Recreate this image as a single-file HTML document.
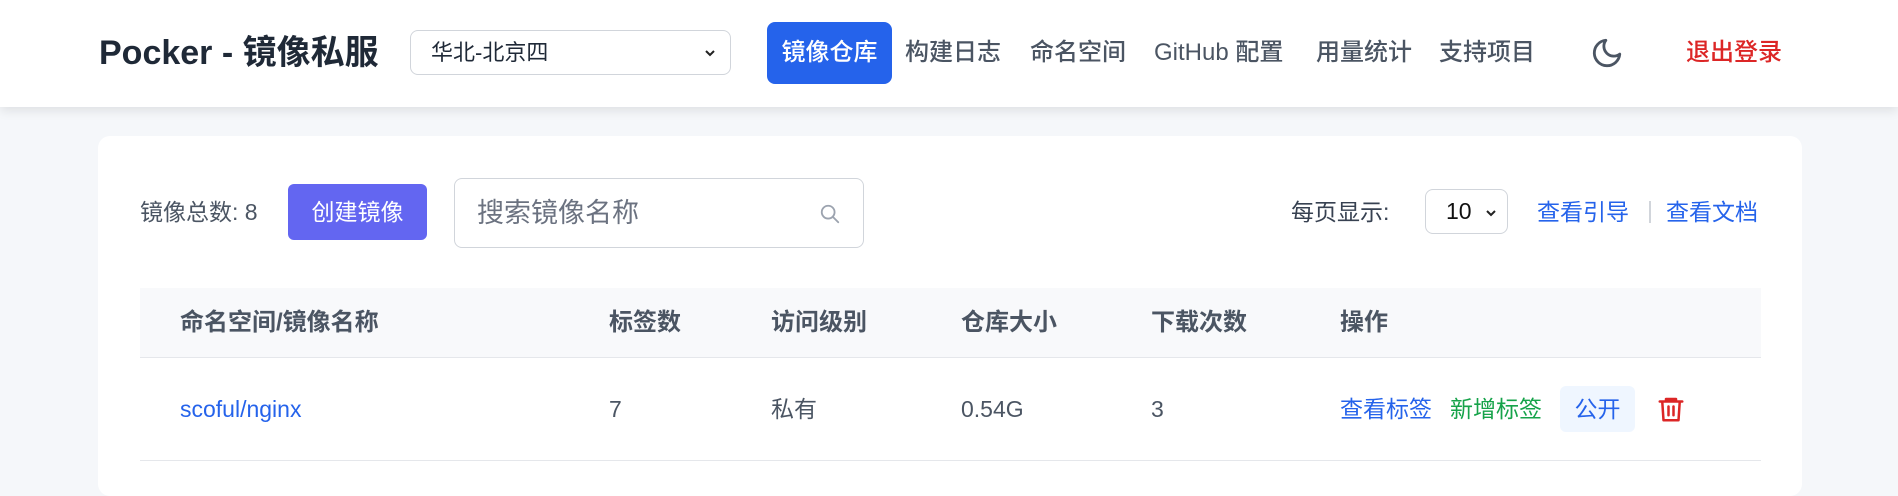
<!DOCTYPE html>
<html><head><meta charset="utf-8"><style>
*{box-sizing:border-box;margin:0;padding:0}
body{width:1898px;height:465px;overflow:hidden;background:#f5f7fa;font-family:"Liberation Sans","Noto Sans CJK SC",sans-serif;position:relative;color:#4b5563}
.hdr{position:absolute;left:0;top:0;width:1898px;height:107px;background:#fff;box-shadow:0 4px 10px rgba(0,0,0,.09)}
.a{position:absolute;white-space:nowrap}
.title{left:99px;top:33px;height:40px;line-height:40px;font-size:34px;font-weight:bold;color:#1f2937}
.sel{left:410px;top:30px;width:321px;height:45px;line-height:43px;border:1px solid #d1d5db;border-radius:8px;font-size:22px;color:#1f2937;padding-left:20px}
.nav{top:38px;height:30px;line-height:30px;font-size:24px;color:#4b5563;font-weight:500}
.act{left:767px;top:22px;width:125px;height:62px;background:#2563eb;border-radius:8px;color:#fff;font-size:24px;font-weight:500;text-align:center;line-height:62px}
.card{left:98px;top:136px;width:1704px;height:360px;background:#fff;border-radius:12px}
.t{top:197px;height:30px;line-height:30px;font-size:23px}
.btn{left:288px;top:184px;width:139px;height:56px;background:#6366f1;border-radius:6px;color:#fff;font-size:23px;text-align:center;line-height:56px}
.search{left:454px;top:178px;width:410px;height:70px;line-height:68px;border:1px solid #d1d5db;border-radius:8px;font-size:27px;color:#6b7280;padding-left:22px}
.ps{left:1425px;top:189px;width:83px;height:45px;line-height:43px;border:1px solid #d1d5db;border-radius:8px;font-size:23px;color:#111;padding-left:20px}
.th{left:140px;top:288px;width:1621px;height:70px;background:#f8f9fb;border-bottom:1px solid #e5e7eb}
.hc{top:308px;height:30px;line-height:30px;font-size:24px;font-weight:600;color:#4b5563}
.rc{top:394px;height:30px;line-height:30px;font-size:23px;color:#4b5563}
.blue{color:#2563eb !important}
.rb{left:140px;top:460px;width:1621px;height:1px;background:#e5e7eb}
</style></head><body>
<div class="hdr"></div>
<div class="a title">Pocker - 镜像私服</div>
<div class="a sel">华北-北京四<svg style="position:absolute;right:14px;top:17px" width="12" height="10" viewBox="0 0 12 10" fill="none" stroke="#222" stroke-width="2"><path d="M2 3l4 4 4-4"/></svg></div>
<div class="a act">镜像仓库</div>
<div class="a nav" style="left:905px">构建日志</div>
<div class="a nav" style="left:1030px">命名空间</div>
<div class="a nav" style="left:1154px">GitHub 配置</div>
<div class="a nav" style="left:1316px">用量统计</div>
<div class="a nav" style="left:1439px">支持项目</div>
<svg class="a" style="left:1590px;top:36px" width="34" height="34" viewBox="0 0 24 24" fill="none" stroke="#4b5563" stroke-width="2" stroke-linecap="round" stroke-linejoin="round"><path d="M21 12.8A9 9 0 1 1 11.2 3a7 7 0 0 0 9.8 9.8z"/></svg>
<div class="a nav" style="left:1686px;color:#dc2626">退出登录</div>
<div class="a card"></div>
<div class="a t" style="left:140px">镜像总数: 8</div>
<div class="a btn">创建镜像</div>
<div class="a search">搜索镜像名称
<svg style="position:absolute;right:22px;top:24px" width="22" height="22" viewBox="0 0 24 24" fill="none" stroke="#9ca3af" stroke-width="2" stroke-linecap="round"><circle cx="10" cy="10" r="7"/><path d="M15 15l6 6"/></svg></div>
<div class="a t" style="left:1291px;color:#374151">每页显示:</div>
<div class="a ps">10<svg style="position:absolute;right:10px;top:18px" width="12" height="10" viewBox="0 0 12 10" fill="none" stroke="#222" stroke-width="2"><path d="M2 3l4 4 4-4"/></svg></div>
<div class="a t blue" style="left:1537px">查看引导</div>
<div class="a" style="left:1649px;top:201px;width:2px;height:22px;background:#d1d5db"></div>
<div class="a t blue" style="left:1666px">查看文档</div>
<div class="a th"></div>
<div class="a hc" style="left:180px">命名空间/镜像名称</div>
<div class="a hc" style="left:609px">标签数</div>
<div class="a hc" style="left:771px">访问级别</div>
<div class="a hc" style="left:961px">仓库大小</div>
<div class="a hc" style="left:1151px">下载次数</div>
<div class="a hc" style="left:1340px">操作</div>
<div class="a rc blue" style="left:180px;font-weight:500">scoful/nginx</div>
<div class="a rc" style="left:609px">7</div>
<div class="a rc" style="left:771px">私有</div>
<div class="a rc" style="left:961px">0.54G</div>
<div class="a rc" style="left:1151px">3</div>
<div class="a rc blue" style="left:1340px">查看标签</div>
<div class="a rc" style="left:1450px;color:#16a34a">新增标签</div>
<div class="a" style="left:1560px;top:386px;width:75px;height:46px;background:#eff6ff;border-radius:6px;color:#2563eb;font-size:23px;text-align:center;line-height:46px">公开</div>
<svg class="a" style="left:1656px;top:394px" width="30" height="30" viewBox="0 0 24 24" fill="none" stroke="#dc2626" stroke-width="2" stroke-linecap="round" stroke-linejoin="round"><path d="M3 6h18M8 6V4h8v2M5 6l1 15h12l1-15M10 10v7M14 10v7"/></svg>
<div class="a rb"></div>
</body></html>
